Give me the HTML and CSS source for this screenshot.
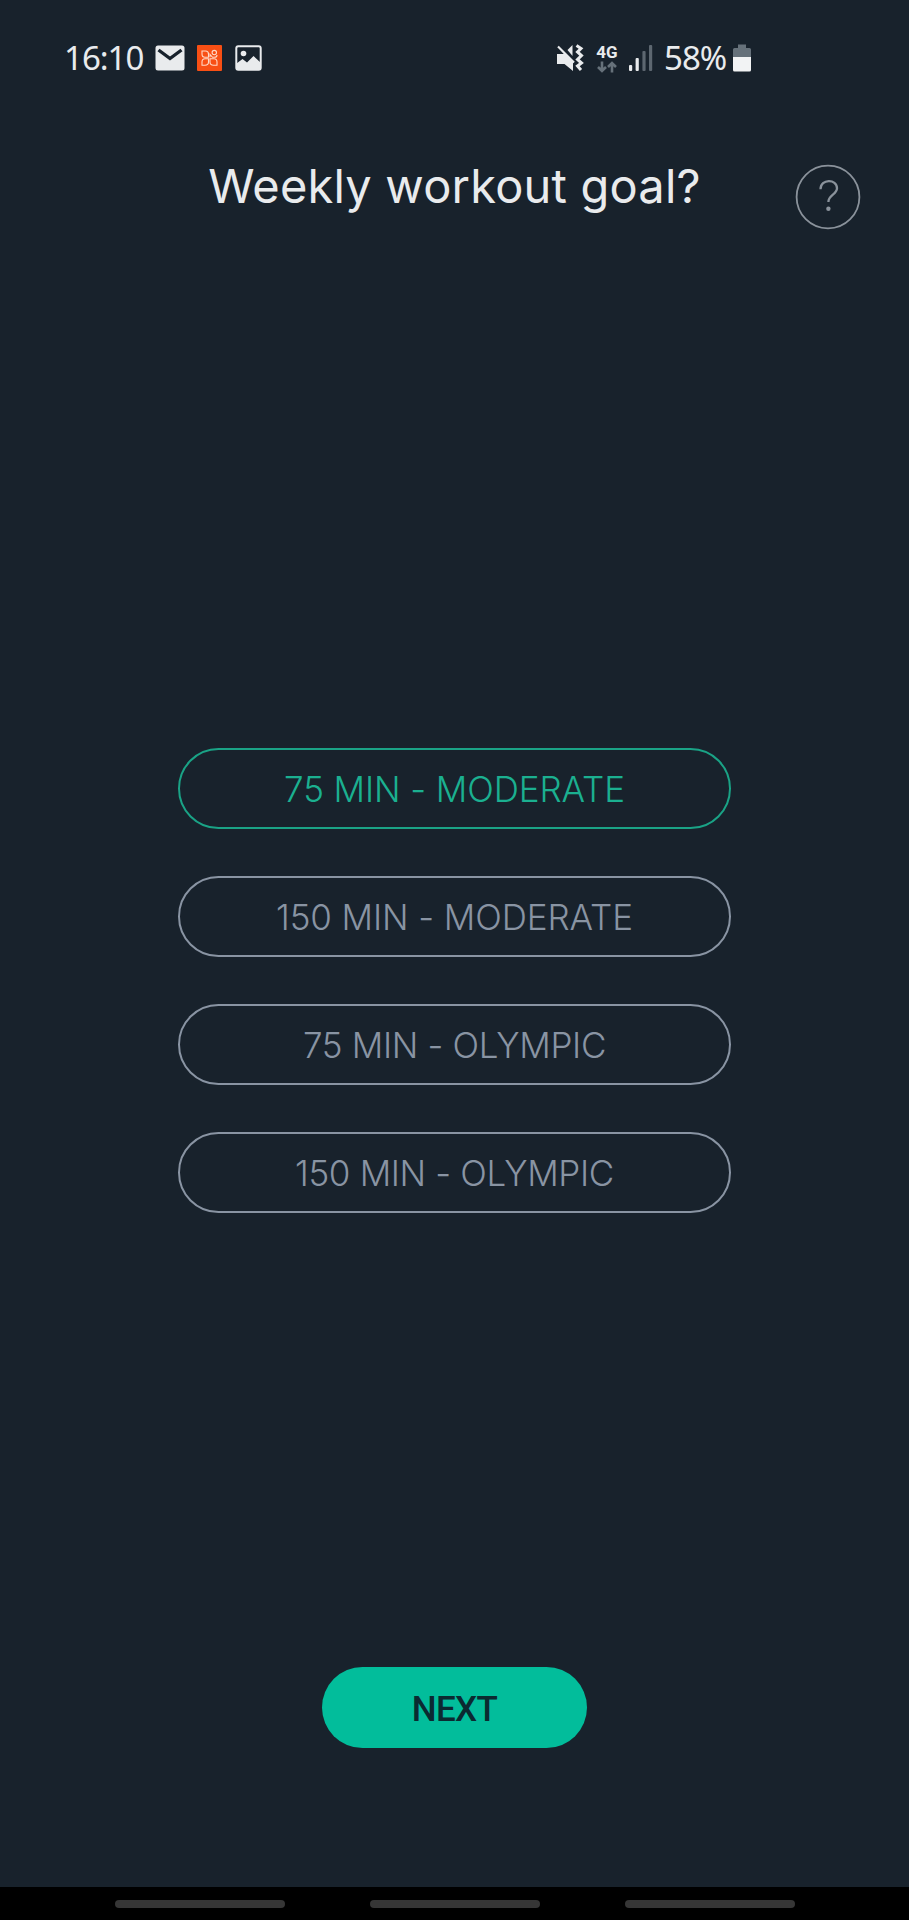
FILE: index.html
```html
<!DOCTYPE html>
<html lang="en">
<head>
    <meta charset="UTF-8">
    <meta name="viewport" content="width=device-width, initial-scale=1.0">
    <title>Weekly workout goal</title>
    <link rel="stylesheet" href="styles.css">
</head>
<body>
    <div class="status-bar">
        <div class="status-left">
            <span class="clock">16:10</span>
            <svg class="icon-mail" width="30" height="26" viewBox="0 0 30 26">
                <rect x="0.5" y="0.5" width="29" height="25" rx="2.5" fill="#e9ebed"/>
                <path d="M3.5 5 L15 13.5 L26.5 5" fill="none" stroke="#18222c" stroke-width="3.4"/>
            </svg>
            <svg class="icon-app" width="25" height="26" viewBox="0 0 25 26">
                <rect width="25" height="26" rx="1" fill="#f84f14"/>
                <g fill="none" stroke="#ffd9c6" stroke-width="1.1">
                    <path d="M11.5 12.3H8Q5 12.3 5 9V6H8.5Q11.5 6 11.5 9Z"/>
                    <path d="M11.5 13.7V17Q11.5 20.2 8 20.2H5V17Q5 13.7 8 13.7Z"/>
                    <path d="M13 13.7H17Q20 13.7 20 17V20.2H16.5Q13 20.2 13 17Z"/>
                    <path d="M13 12.3V9.5L15.5 12.3H17.5Q20 12.3 20 10"/>
                    <circle cx="17.3" cy="7.6" r="2.2"/>
                </g>
            </svg>
            <svg class="icon-photo" width="27" height="26" viewBox="0 0 27 26">
                <rect x="1.3" y="1.3" width="24.4" height="23.4" rx="2" fill="none" stroke="#e9ebed" stroke-width="2"/>
                <circle cx="8.5" cy="8.5" r="2.8" fill="#e9ebed"/>
                <path d="M1.5 18.5 L7.5 14 L12 17.5 L18.5 11 L25.5 17.5 V24.5 H1.5 Z" fill="#e9ebed"/>
            </svg>
        </div>
        <div class="status-right">
            <svg class="icon-mute" width="28" height="28" viewBox="0 0 28 28">
                <path d="M2 3 L17 18 V27 L8.5 20 H1 V10 H8 Z" fill="#e9ebed"/>
                <path d="M11.5 6 L16.5 1 V12 Z" fill="#e9ebed"/>
                <path d="M2 2.5 L18 18.5" stroke="#e9ebed" stroke-width="2.2"/>
                <path d="M20.5 1.5 L25 4.5 L21.5 8 L25.5 11.5 L21.5 15.5 L25.5 19 L21.5 22 L25 26" fill="none" stroke="#e9ebed" stroke-width="3"/>
            </svg>
            <div class="network">
                <span class="network-type">4G</span>
                <svg width="20" height="12" viewBox="0 0 20 12">
                    <path d="M5 0.5 V9.5 M1 6 L5 10 L9 6 M15 11.5 V2.5 M11 6 L15 2 L19 6" fill="none" stroke="#66717a" stroke-width="2.6"/>
                </svg>
            </div>
            <svg class="icon-signal" width="24" height="26" viewBox="0 0 24 26">
                <rect x="0" y="20" width="3.2" height="6" rx="1" fill="#e9ebed"/>
                <rect x="6.6" y="13" width="3.2" height="13" rx="1" fill="#e9ebed"/>
                <rect x="13.4" y="6" width="3.2" height="20" rx="1" fill="#5d6770"/>
                <rect x="20" y="0" width="3.2" height="26" rx="1" fill="#5d6770"/>
            </svg>
            <span class="battery-level">58%</span>
            <svg class="icon-battery" width="18" height="28" viewBox="0 0 18 28">
                <path d="M5 0.5 H13 V4 H16.5 Q18 4 18 5.5 V13 H0 V5.5 Q0 4 1.5 4 H5 Z" fill="#66717a"/>
                <path d="M0 13 H18 V26 Q18 27.5 16.5 27.5 H1.5 Q0 27.5 0 26 Z" fill="#f2f3f4"/>
            </svg>
        </div>
    </div>

    <header class="page-header">
        <h1>Weekly workout goal?</h1>
        <svg class="help" width="66" height="66" viewBox="0 0 66 66">
            <circle cx="33" cy="33" r="31.4" fill="none" stroke="#8a929b" stroke-width="1.8"/>
            <path d="M25.5 25.3 C25.5 14.5 42 14.5 42 24.3 C42 30.5 33.4 31 33.4 38" fill="none" stroke="#8a929b" stroke-width="2.3"/>
            <circle cx="33.4" cy="44.7" r="2.2" fill="#8a929b"/>
        </svg>
    </header>

    <main class="goals">
        <button class="goal selected">75 MIN - MODERATE</button>
        <button class="goal">150 MIN - MODERATE</button>
        <button class="goal olympic">75 MIN - OLYMPIC</button>
        <button class="goal olympic">150 MIN - OLYMPIC</button>
    </main>

    <button class="next">NEXT</button>

    <nav class="nav-bar">
        <span></span>
        <span></span>
        <span></span>
    </nav>
</body>
</html>
```

FILE: styles.css
```css
* {
    margin: 0;
    padding: 0;
    box-sizing: border-box;
}

body {
    display: flex;
    flex-direction: column;
    align-items: center;
    width: 909px;
    height: 1920px;
    overflow: hidden;
    background: #18222c;
    color: #e9ebed;
    font-family: Inter, sans-serif;
}

.status-bar {
    display: flex;
    justify-content: space-between;
    width: 100%;
    height: 116px;
    padding: 0 158px 0 64px;
    font-family: "Noto Sans", sans-serif;
}

.status-left,
.status-right {
    display: flex;
    align-items: center;
    height: 116px;
}

.clock,
.battery-level {
    font-size: 33px;
    line-height: 40px;
    letter-spacing: -1px;
    color: #e9ebed;
}

.clock {
    width: 91px;
}

.icon-app {
    margin-left: 12px;
}

.icon-photo {
    margin-left: 13px;
}

.network {
    display: flex;
    flex-direction: column;
    align-items: center;
    width: 22px;
    margin-left: 12px;
}

.network-type {
    font-family: Roboto, sans-serif;
    font-size: 17px;
    font-weight: bold;
    line-height: 17px;
}

.icon-signal {
    margin-left: 11px;
}

.battery-level {
    width: 69px;
    margin-left: 11px;
}

.page-header {
    display: flex;
    justify-content: center;
    position: relative;
    width: 100%;
    height: 632px;
    padding-top: 42px;
}

h1 {
    font-size: 47px;
    font-weight: 400;
    line-height: 56px;
    letter-spacing: 0.2px;
    white-space: nowrap;
}

.help {
    position: absolute;
    top: 48px;
    right: 48px;
}

.goals {
    display: flex;
    flex-direction: column;
    gap: 47px;
}

button {
    height: 81px;
    border-radius: 41px;
    font-family: Inter, sans-serif;
    font-size: 35px;
    cursor: pointer;
}

.goal {
    width: 553px;
    background: none;
    border: 2px solid #8994a3;
    color: #8994a3;
    font-weight: 300;
    letter-spacing: -0.1px;
}

.goal.olympic {
    letter-spacing: -0.35px;
}

.goal.selected {
    border-color: #1aa386;
    color: #1bb090;
}

.next {
    width: 265px;
    margin-top: 454px;
    padding-top: 3px;
    background: #02bd9b;
    border: none;
    color: #0b2a31;
    font-family: Roboto, sans-serif;
    font-weight: 500;
    letter-spacing: -0.6px;
}

.nav-bar {
    display: flex;
    justify-content: center;
    gap: 85px;
    width: 100%;
    height: 33px;
    margin-top: auto;
    padding-top: 13px;
    background: #000;
}

.nav-bar span {
    width: 170px;
    height: 8px;
    border-radius: 4px;
    background: #363636;
}
```
